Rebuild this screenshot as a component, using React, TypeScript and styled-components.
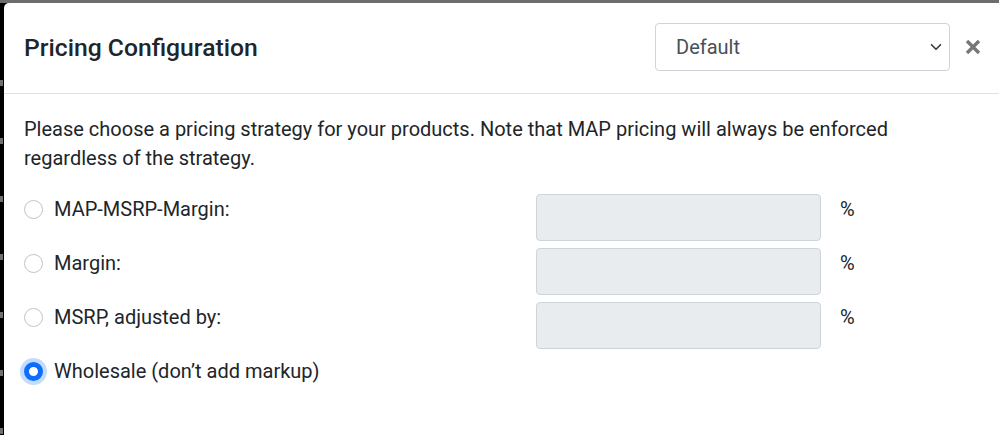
import React from 'react';
import styled, { createGlobalStyle } from 'styled-components';

const GlobalStyle = createGlobalStyle`
  html, body {
    margin: 0;
    padding: 0;
    background: #000;
    overflow: hidden;
  }
  body {
    font-family: Roboto, "Noto Sans", Arial, sans-serif;
    color: #212529;
  }
  * { box-sizing: border-box; }
`;

const Page = styled.div`
  width: 999px;
  height: 435px;
  display: flex;
  flex-direction: column;
  background: #000;
  overflow: hidden;
`;

const TopBar = styled.div`
  height: 3px;
  flex: none;
  background: #6d6d6d;
`;

const Stage = styled.div`
  flex: 1;
  display: flex;
  min-height: 0;
`;

const LeftStrip = styled.div`
  width: 4px;
  flex: none;
  background-color: #000;
  background-image: repeating-linear-gradient(
    to bottom,
    #000 0px,
    #000 52px,
    #6f6f6f 52px,
    #6f6f6f 58px
  );
  background-size: 3px 100%;
  background-repeat: no-repeat;
  background-position: 0 25px;
`;

const Modal = styled.div`
  flex: none;
  width: 1010px;
  background: #fff;
  border-top-left-radius: 5px;
  display: flex;
  flex-direction: column;
`;

const Header = styled.div`
  height: 91px;
  flex: none;
  display: flex;
  align-items: center;
  padding: 0 0 0 20px;
  border-bottom: 1px solid #dee2e6;
`;

const Title = styled.h5`
  margin: 0;
  flex: 1;
  font-size: 24.7px;
  font-weight: 500;
  line-height: 1.2;
  color: #212529;
`;

const SelectBox = styled.div`
  position: relative;
  width: 295px;
  height: 48px;
  margin-top: -2px;
  border: 1px solid #ced4da;
  border-radius: 4px;
  display: flex;
  align-items: center;
  padding-left: 20px;
  font-size: 20px;
  color: #495057;
  background: #fff;
`;

const Chevron = styled.svg`
  position: absolute;
  right: 7px;
  top: 50%;
  transform: translateY(-50%);
`;

const CloseButton = styled.button`
  border: 0;
  background: transparent;
  padding: 0;
  margin: -2px 0 0 15px;
  width: 16px;
  height: 16px;
  display: flex;
  align-items: center;
  justify-content: center;
  cursor: pointer;
`;

const Spacer = styled.div`
  width: 33px;
  flex: none;
`;

const Body = styled.div`
  padding: 21px 20px 20px 20px;
  font-size: 20px;
  line-height: 29px;
`;

const Intro = styled.p`
  margin: 0 0 21px 0;
  width: 900px;
`;

const OptionRow = styled.div`
  display: flex;
  align-items: flex-start;
  margin-bottom: 7px;
  min-height: 47px;
`;

const OptionLabel = styled.label`
  width: 512px;
  flex: none;
  display: flex;
  align-items: center;
  margin-top: 1px;
  cursor: pointer;
`;

const Radio = styled.span<{ $checked?: boolean }>`
  width: 19px;
  height: 19px;
  flex: none;
  border-radius: 50%;
  margin-right: 11px;
  border: ${({ $checked }) => ($checked ? '5.5px solid #0d6efd' : '1px solid #bfc4c9')};
  background: #fff;
  box-shadow: ${({ $checked }) => ($checked ? '0 0 0 4px #c3dbfd' : 'none')};
`;

const RateInput = styled.div`
  width: 285px;
  height: 47px;
  flex: none;
  background: #e9ecef;
  border: 1px solid #ced4da;
  border-radius: 4px;
`;

const Percent = styled.span`
  margin-left: 19px;
  margin-top: 1px;
`;

const options = [
  { label: 'MAP-MSRP-Margin:', hasInput: true },
  { label: 'Margin:', hasInput: true },
  { label: 'MSRP, adjusted by:', hasInput: true },
  { label: 'Wholesale (don\u2019t add markup)', hasInput: false, checked: true },
];

const App: React.FC = () => {
  return (
    <>
      <GlobalStyle />
      <Page>
        <TopBar />
        <Stage>
          <LeftStrip />
          <Modal>
            <Header>
              <Title>Pricing Configuration</Title>
              <SelectBox>
                Default
                <Chevron width="12" height="12" viewBox="0 0 16 16">
                  <path d="M2 5l6 6 6-6" fill="none" stroke="#343a40" strokeWidth="2.2" strokeLinecap="round" strokeLinejoin="round" />
                </Chevron>
              </SelectBox>
              <CloseButton aria-label="Close">
                <svg width="16" height="16" viewBox="0 0 16 16">
                  <path d="M2 2l12 12M14 2L2 14" stroke="#777" strokeWidth="3.4" strokeLinecap="butt" />
                </svg>
              </CloseButton>
              <Spacer />
            </Header>
            <Body>
              <Intro>
                Please choose a pricing strategy for your products. Note that MAP pricing will always be enforced
                regardless of the strategy.
              </Intro>
              {options.map((o) => (
                <OptionRow key={o.label}>
                  <OptionLabel>
                    <Radio $checked={o.checked} />
                    {o.label}
                  </OptionLabel>
                  {o.hasInput && (
                    <>
                      <RateInput />
                      <Percent>%</Percent>
                    </>
                  )}
                </OptionRow>
              ))}
            </Body>
          </Modal>
        </Stage>
      </Page>
    </>
  );
};

export default App;
